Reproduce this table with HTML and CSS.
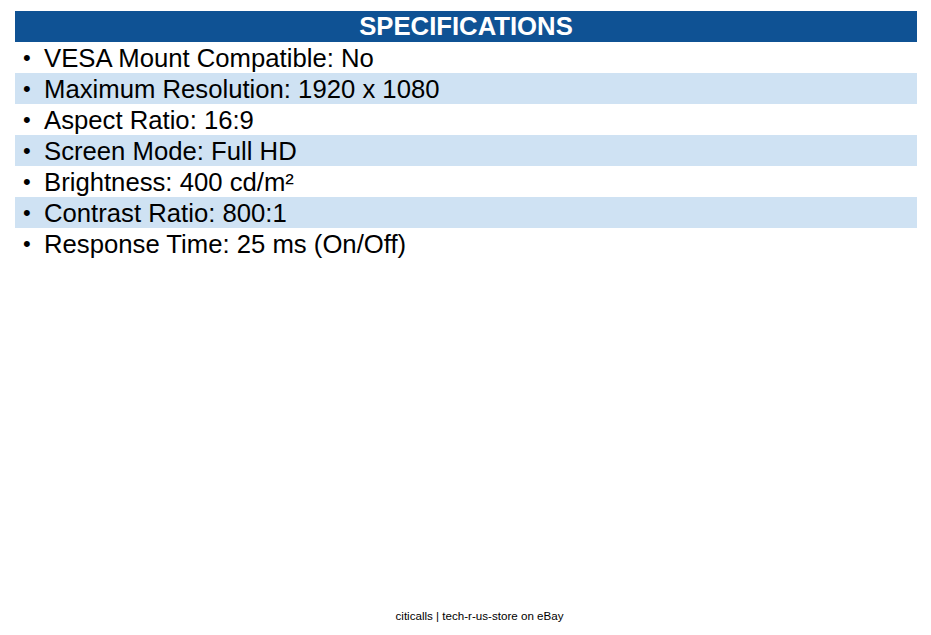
FILE: index.html
```html
<!DOCTYPE html>
<html>
<head>
<meta charset="utf-8">
<link rel="stylesheet" href="styles.css">
</head>
<body>
<div class="page">
  <div class="specs">
    <div class="header">SPECIFICATIONS</div>
    <ul class="list">
      <li class="row">VESA Mount Compatible: No</li>
      <li class="row alt">Maximum Resolution: 1920 x 1080</li>
      <li class="row">Aspect Ratio: 16:9</li>
      <li class="row alt">Screen Mode: Full HD</li>
      <li class="row">Brightness: 400 cd/m²</li>
      <li class="row alt">Contrast Ratio: 800:1</li>
      <li class="row">Response Time: 25 ms (On/Off)</li>
    </ul>
  </div>
  <div class="footer">citicalls | tech-r-us-store on eBay</div>
</div>
</body>
</html>
```
FILE: styles.css
```css
html, body {
  margin: 0;
  padding: 0;
  background: #ffffff;
}
body {
  font-family: "Liberation Sans", Arial, sans-serif;
  color: #000;
}
.page {
  width: 931px;
  height: 635px;
  display: flex;
  flex-direction: column;
}
.specs {
  margin: 11px 14px 0 15px;
}
.header {
  background: #0f5294;
  color: #fff;
  font-weight: bold;
  font-size: 25.7px;
  height: 31px;
  line-height: 31px;
  text-align: center;
}
.list {
  list-style: none;
  margin: 0;
  padding: 0;
}
.row {
  height: 30px;
  padding-top: 1px;
  line-height: 30px;
  font-size: 25.7px;
  padding-left: 29px;
  position: relative;
}
.row::before {
  content: "•";
  position: absolute;
  left: 8px;
  top: 1px;
  font-size: 22px;
}
.alt {
  background: #cfe2f3;
}
.footer {
  margin-top: auto;
  margin-bottom: 12px;
  padding-left: 28px;
  text-align: center;
  font-size: 11.6px;
  line-height: 14px;
}
```
